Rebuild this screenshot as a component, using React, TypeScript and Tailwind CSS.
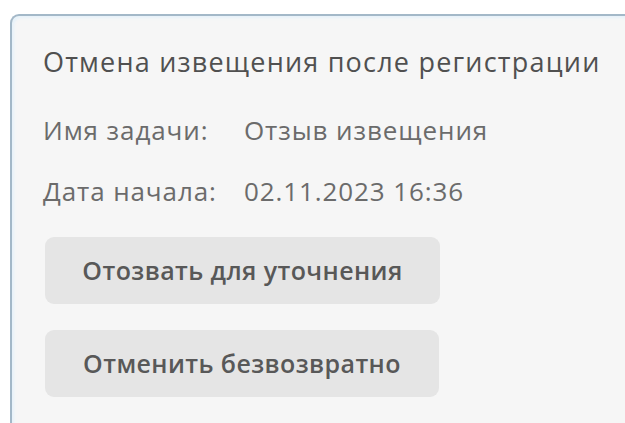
export default function App() {
  return (
    <div
      className="h-[423px] w-[625px] overflow-hidden bg-white pl-[10px] pt-[14px]"
      style={{ fontFamily: '"Open Sans", "Noto Sans", sans-serif' }}
    >
      <div className="h-[440px] w-[650px] rounded-tl-[9px] border-l-2 border-t-2 border-[#a3b8c8] bg-[#f6f6f6] pl-[31px] pt-[28px] shadow-[inset_2px_2px_3px_#e6f2fa]">
        <div className="h-[36px] text-[27px] leading-[36px] font-medium tracking-[1.2px] text-[#505050]">
          Отмена извещения после регистрации
        </div>
        <div className="mt-[32px] flex h-[36px] text-[26px] leading-[36px] tracking-[0.9px] text-[#6b6b6b]">
          <span className="w-[201px] shrink-0">Имя задачи:</span>
          <span>Отзыв извещения</span>
        </div>
        <div className="mt-[25px] flex h-[36px] text-[26px] leading-[36px] tracking-[0.9px] text-[#6b6b6b]">
          <span className="w-[201px] shrink-0">Дата начала:</span>
          <span>02.11.2023 16:36</span>
        </div>
        <div className="mt-[28px] flex flex-col gap-[26px] pl-[2px]">
          <button className="flex h-[67px] w-[395px] items-center justify-center rounded-[9px] bg-[#e5e5e5] text-[25px] font-semibold tracking-[0.4px] text-[#585858]">
            Отозвать для уточнения
          </button>
          <button className="flex h-[67px] w-[394px] items-center justify-center rounded-[9px] bg-[#e5e5e5] text-[25px] font-semibold tracking-[0.4px] text-[#585858]">
            Отменить безвозвратно
          </button>
        </div>
      </div>
    </div>
  );
}
